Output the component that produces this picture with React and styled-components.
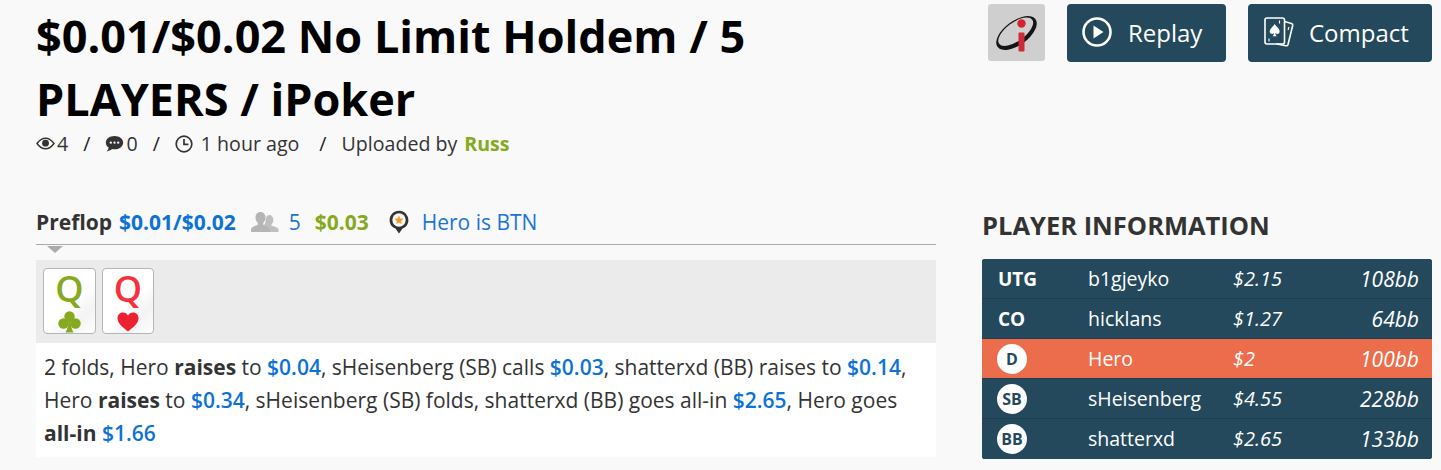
import React from "react";
import styled, { createGlobalStyle } from "styled-components";

const GlobalStyle = createGlobalStyle`
  html, body { margin: 0; padding: 0; background: #f9f9f9; }
  body { font-family: "Open Sans", "Liberation Sans", sans-serif; color: #333; overflow: hidden; }
`;

const Page = styled.div`
  display: flex;
  align-items: flex-start;
  width: 1441px;
  height: 470px;
  padding-left: 36px;
  box-sizing: border-box;
`;
const Left = styled.div`
  width: 900px;
`;
const Right = styled.div`
  width: 450px;
  margin-left: 46px;
`;
const Title = styled.h1`
  margin: 4px 0 0;
  max-width: 800px;
  font-size: 45px;
  line-height: 63px;
  font-weight: 700;
  color: #000;
`;
const Meta = styled.div`
  display: flex;
  align-items: center;
  height: 27px;
  font-size: 19.6px;
  color: #333;
`;
const MetaItem = styled.span`
  display: flex;
  align-items: center;
  gap: ${(p) => p.$gap || 2}px;
`;
const Slash = styled.span`
  margin: 0 ${(p) => p.$right || 15}px 0 ${(p) => p.$left || 15}px;
  color: #222;
`;
const Author = styled.b`
  color: #86a920;
  margin-left: 7px;
`;
const StreetRow = styled.div`
  display: flex;
  align-items: center;
  height: 30px;
  margin-top: 50px;
  font-size: 21px;
`;
const StreetName = styled.b`
  color: #333;
  margin-right: 7px;
`;
const Pot = styled.b`
  color: #0c72d6;
`;
const Plain = styled.span`
  color: #1b74d4;
  margin-left: ${(p) => p.$ml || 0}px;
`;
const IconSlot = styled.span`
  display: flex;
  margin-left: ${(p) => p.$ml}px;
`;
const Green = styled.b`
  color: #86a920;
  margin-left: 14px;
`;
const StreetLine = styled.div`
  position: relative;
  height: 1px;
  margin-top: 7px;
  background: #aaa;
  &::after {
    content: "";
    position: absolute;
    left: 11px;
    top: 2px;
    border-left: 8px solid transparent;
    border-right: 8px solid transparent;
    border-top: 7px solid #aaa;
  }
`;
const CardTray = styled.div`
  display: flex;
  gap: 6px;
  height: 83px;
  margin-top: 15px;
  padding: 8px 7px 0;
  box-sizing: border-box;
  background: #ebebeb;
`;
const Card = styled.div`
  display: flex;
  flex-direction: column;
  align-items: center;
  width: ${(p) => p.$w}px;
  height: 66px;
  box-sizing: border-box;
  border: 1px solid #b5b5b5;
  border-radius: 4px;
  background: linear-gradient(135deg, #fff 55%, #f3f3f3 75%, #fff);
  color: ${(p) => p.$color};
  font-size: 36px;
  line-height: 40px;
  font-weight: 600;
`;
const Action = styled.div`
  padding: 8px 8px 0;
  height: 114px;
  box-sizing: border-box;
  background: #fff;
  font-size: 21px;
  line-height: 33px;
  color: #333;
`;
const Amount = styled.b`
  color: #0c72d6;
  font-weight: 600;
`;
const Actions = styled.div`
  display: flex;
  gap: 22px;
  align-items: flex-start;
  margin-top: 4px;
  padding-left: 6px;
`;
const Logo = styled.div`
  display: flex;
  align-items: center;
  justify-content: center;
  width: 57px;
  height: 57px;
  border-radius: 3px;
  background: #cfcfcf;
`;
const Button = styled.div`
  display: flex;
  align-items: center;
  gap: ${(p) => p.$gap}px;
  width: ${(p) => p.$w}px;
  height: 58px;
  padding: 0 0 2px ${(p) => p.$pl}px;
  box-sizing: border-box;
  border-radius: 4px;
  background: #24495c;
  color: #fff;
  font-size: 24px;
`;
const Heading = styled.h2`
  margin: 146px 0 0;
  font-size: 25.5px;
  line-height: 34px;
  font-weight: 700;
  color: #333;
`;
const PlayerTable = styled.div`
  margin-top: 17px;
  border-radius: 3px;
  overflow: hidden;
  background: #24495c;
`;
const Row = styled.div`
  display: grid;
  grid-template-columns: 90px 145px 186px;
  align-items: center;
  height: 40px;
  box-sizing: border-box;
  padding-left: 16px;
  background: ${(p) => (p.$hero ? "#ec6d4b" : "#24495c")};
  border-bottom: 1px solid ${(p) => (p.$last ? "#24495c" : "#1e3e4f")};
  color: #fff;
  font-size: 19.5px;
`;
const Pos = styled.b`
  font-size: 19px;
`;
const Badge = styled.span`
  display: flex;
  align-items: center;
  justify-content: center;
  width: 30px;
  height: 30px;
  margin-left: -1px;
  border-radius: 50%;
  background: #fff;
  color: #24495c;
  font-size: 16px;
  font-weight: 700;
`;
const Figures = styled.i`
  display: flex;
  justify-content: space-between;
  align-items: center;
  font-style: italic;
  font-size: ${(p) => p.$size}px;
`;
const BigBlinds = styled.span`
  font-size: 21px;
`;

const EyeIcon = () => (
  <svg width="19" height="13" viewBox="0 0 19 13" fill="none">
    <path d="M1 6.5C3.5 3 6.3 1.2 9.5 1.2S15.5 3 18 6.5C15.5 10 12.7 11.8 9.5 11.8S3.5 10 1 6.5Z" stroke="#333" strokeWidth="1.4" />
    <circle cx="9.5" cy="6.2" r="3.4" fill="#333" />
  </svg>
);
const ChatIcon = () => (
  <svg width="19" height="18" viewBox="0 0 18 17">
    <path d="M9 1C4.4 1 .8 3.7.8 7.2c0 1.9 1 3.5 2.700 4.700-.2 1.400-.9 2.500-1.900 3.600 1.900-.2 3.600-.9 5-2.200.7.1 1.500.2 2.400.2 4.600 0 8.200-2.800 8.200-6.300S13.600 1 9 1Z" fill="#333" />
    <circle cx="5.5" cy="7.2" r="1.1" fill="#f9f9f9" />
    <circle cx="9" cy="7.2" r="1.1" fill="#f9f9f9" />
    <circle cx="12.5" cy="7.2" r="1.1" fill="#f9f9f9" />
  </svg>
);
const ClockIcon = () => (
  <svg width="18" height="18" viewBox="0 0 18 18" fill="none" stroke="#333" strokeWidth="1.7">
    <circle cx="9" cy="9" r="7.8" />
    <path d="M9 4v5.3h4.4" />
  </svg>
);
const PeopleIcon = () => (
  <svg width="28" height="20" viewBox="0 0 28 20" fill="#b5b5b5">
    <path d="M18 3c2.900 0 4.400 2.100 4.400 4.800 0 2-.9 3.600-2 4.600v1.300c2.800.6 6.300 1.500 7.100 3.400V20H17.500v-2.500c-.6-1.700-2.500-2.900-4.200-3.500v-1.600c1-1.100 1.400-2.800 1.300-4.600C14.500 5.300 16 3 18 3Z" opacity=".85" />
    <path d="M9.500 0c3.200 0 5 2.400 5 5.500 0 2.300-1 4.100-2.200 5.200V13c3.100.7 6.100 2 6.700 4.200V20H0v-2.800C.6 15 3.600 13.700 6.700 13v-2.300C5.500 9.600 4.500 7.800 4.500 5.500 4.500 2.400 6.300 0 9.500 0Z" />
  </svg>
);
const PinIcon = () => (
  <svg width="20" height="24" viewBox="0 0 20 24">
    <path d="M10 23.500 6.500 18.600C3 17.300.6 14 .6 10.200.6 5 4.800.8 10 .8s9.400 4.200 9.400 9.400c0 3.800-2.400 7.100-5.900 8.400Z" fill="#333" />
    <circle cx="10" cy="10" r="6.700" fill="#f9f9f9" />
    <path d="m10 5.500 1.300 3 3.200.3-2.400 2.100.7 3.100-2.800-1.600-2.800 1.600.7-3.100-2.400-2.100 3.200-.3Z" fill="#f39c1f" />
  </svg>
);
const PlayIcon = () => (
  <svg width="30" height="30" viewBox="0 0 30 30" fill="none">
    <circle cx="15" cy="15" r="13.500" stroke="#fff" strokeWidth="2.600" />
    <path d="M11.500 8.500v13l10-6.500Z" fill="#fff" />
  </svg>
);
const CardsIcon = () => (
  <svg width="30" height="31" viewBox="0 0 30 31" fill="none" stroke="#fff" strokeWidth="1.600">
    <path d="M20.500 4.500 27.500 6.500c1 .3 1.400 1 1.200 2L24 27.500c-.3 1-1 1.500-2 1.200l-9.500-1.800" />
    <rect x="1" y="1" width="19.500" height="26" rx="2" />
    <path d="M10.700 7c1.500 2.600 5 4.500 5 7.600 0 2.500-2.800 3.200-4.300 1.400.1 1.300.5 2.300 1.400 3.200H8.600c.9-.9 1.300-1.900 1.400-3.200-1.500 1.800-4.300 1.100-4.300-1.400 0-3.100 3.500-5 5-7.600Z" fill="#fff" stroke="none" />
    <path d="M15.500 3.500v3M5 21.500v3M25 10l-1 3" strokeWidth="1.100" />
  </svg>
);
const IPokerLogo = () => (
  <svg width="44" height="40" viewBox="0 0 44 40">
    <ellipse cx="21.500" cy="20" rx="23.500" ry="12" transform="rotate(-36 21.500 20)" fill="#151515" />
    <ellipse cx="20.700" cy="18.700" rx="20.500" ry="9.300" transform="rotate(-36 20.700 18.700)" fill="#cfcfcf" />
    <rect x="23.500" y="19.500" width="6" height="19" rx="1" fill="#cf2a35" />
    <circle cx="26.500" cy="10.500" r="4.200" fill="#d8232f" />
  </svg>
);
const ClubIcon = () => (
  <svg width="23" height="22" viewBox="0 0 23 22" fill="#86a920" style={{ marginTop: 2 }}>
    <circle cx="11.500" cy="5.500" r="5.200" />
    <circle cx="5.500" cy="12.500" r="5.200" />
    <circle cx="17.500" cy="12.500" r="5.200" />
    <path d="M10.500 9h2c0 5 1 9 3 12.500h-8c2-3.500 3-7.500 3-12.500Z" />
  </svg>
);
const HeartIcon = () => (
  <svg width="22" height="20" viewBox="0 0 22 20" fill="#ee2130" style={{ marginTop: 3 }}>
    <path d="M11 19.500C7 16 .5 12 .5 6.200.5 2.800 3 .6 5.800.6 8 .6 10 1.800 11 3.800 12 1.800 14 .6 16.200.6 19 .6 21.500 2.800 21.500 6.200 21.500 12 15 16 11 19.500Z" />
  </svg>
);

const players = [
  { pos: "UTG", name: "b1gjeyko", stack: "$2.15", bb: "108bb" },
  { pos: "CO", name: "hicklans", stack: "$1.27", bb: "64bb" },
  { pos: "D", name: "Hero", stack: "$2", bb: "100bb", badge: true, hero: true },
  { pos: "SB", name: "sHeisenberg", stack: "$4.55", bb: "228bb", badge: true },
  { pos: "BB", name: "shatterxd", stack: "$2.65", bb: "133bb", badge: true },
];

export default function App() {
  return (
    <Page>
      <GlobalStyle />
      <Left>
        <Title>$0.01/$0.02 No Limit Holdem / 5 PLAYERS / iPoker</Title>
        <Meta>
          <MetaItem><EyeIcon />4</MetaItem>
          <Slash>/</Slash>
          <MetaItem><ChatIcon />0</MetaItem>
          <Slash>/</Slash>
          <MetaItem $gap={8}><ClockIcon />1 hour ago</MetaItem>
          <Slash $left={20}>/</Slash>
          <span>Uploaded by</span>
          <Author>Russ</Author>
        </Meta>
        <StreetRow>
          <StreetName>Preflop</StreetName>
          <Pot>$0.01/$0.02</Pot>
          <IconSlot $ml={15}><PeopleIcon /></IconSlot>
          <Plain $ml={10}>5</Plain>
          <Green>$0.03</Green>
          <IconSlot $ml={20}><PinIcon /></IconSlot>
          <Plain $ml={13}>Hero is BTN</Plain>
        </StreetRow>
        <StreetLine />
        <CardTray>
          <Card $w={53} $color="#86a920">Q<ClubIcon /></Card>
          <Card $w={52} $color="#f8303a">Q<HeartIcon /></Card>
        </CardTray>
        <Action>
          2 folds, Hero <b>raises</b> to <Amount>$0.04</Amount>, sHeisenberg (SB) calls <Amount>$0.03</Amount>, shatterxd (BB) raises to <Amount>$0.14</Amount>, Hero <b>raises</b> to <Amount>$0.34</Amount>, sHeisenberg (SB) folds, shatterxd (BB) goes all-in <Amount>$2.65</Amount>, Hero goes <b>all-in</b> <Amount>$1.66</Amount>
        </Action>
      </Left>
      <Right>
        <Actions>
          <Logo><IPokerLogo /></Logo>
          <Button $w={159} $pl={15} $gap={16}><PlayIcon />Replay</Button>
          <Button $w={184} $pl={16} $gap={15}><CardsIcon />Compact</Button>
        </Actions>
        <Heading>PLAYER INFORMATION</Heading>
        <PlayerTable>
          {players.map((p, i) => (
            <Row key={p.name} $hero={p.hero} $last={i === players.length - 1}>
              {p.badge ? <Badge>{p.pos}</Badge> : <Pos>{p.pos}</Pos>}
              <span>{p.name}</span>
              <Figures $size={20}><span>{p.stack}</span><BigBlinds>{p.bb}</BigBlinds></Figures>
            </Row>
          ))}
        </PlayerTable>
      </Right>
    </Page>
  );
}
